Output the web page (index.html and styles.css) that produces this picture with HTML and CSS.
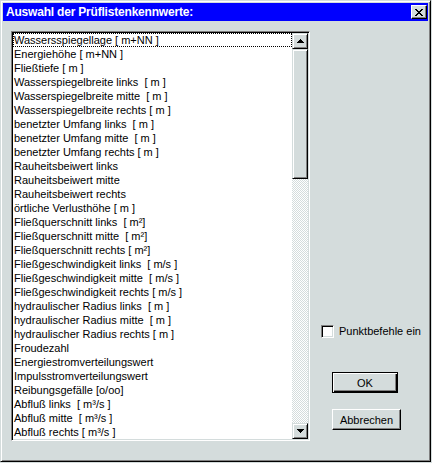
FILE: index.html
```html
<!DOCTYPE html>
<html lang="de">
<head>
<meta charset="utf-8">
<title>Auswahl der Prüflistenkennwerte</title>
<link rel="stylesheet" href="styles.css">
</head>
<body>
<div class="window">
  <div class="titlebar">
    <span class="title">Auswahl der Prüflistenkennwerte:</span>
    <div class="close">
      <svg width="8" height="7" viewBox="0 0 8 7" shape-rendering="crispEdges">
        <rect x="0" y="0" width="2" height="1"/><rect x="6" y="0" width="2" height="1"/>
        <rect x="1" y="1" width="2" height="1"/><rect x="5" y="1" width="2" height="1"/>
        <rect x="2" y="2" width="4" height="1"/>
        <rect x="3" y="3" width="2" height="1"/>
        <rect x="2" y="4" width="4" height="1"/>
        <rect x="1" y="5" width="2" height="1"/><rect x="5" y="5" width="2" height="1"/>
        <rect x="0" y="6" width="2" height="1"/><rect x="6" y="6" width="2" height="1"/>
      </svg>
    </div>
  </div>
  <div class="content">
    <div class="listbox">
      <ul class="items">
        <li class="focus">Wassersspiegellage [ m+NN ]</li>
        <li>Energiehöhe [ m+NN ]</li>
        <li>Fließtiefe [ m ]</li>
        <li>Wasserspiegelbreite links  [ m ]</li>
        <li>Wasserspiegelbreite mitte  [ m ]</li>
        <li>Wasserspiegelbreite rechts [ m ]</li>
        <li>benetzter Umfang links  [ m ]</li>
        <li>benetzter Umfang mitte  [ m ]</li>
        <li>benetzter Umfang rechts [ m ]</li>
        <li>Rauheitsbeiwert links</li>
        <li>Rauheitsbeiwert mitte</li>
        <li>Rauheitsbeiwert rechts</li>
        <li>örtliche Verlusthöhe [ m ]</li>
        <li>Fließquerschnitt links  [ m²]</li>
        <li>Fließquerschnitt mitte  [ m²]</li>
        <li>Fließquerschnitt rechts [ m²]</li>
        <li>Fließgeschwindigkeit links  [ m/s ]</li>
        <li>Fließgeschwindigkeit mitte  [ m/s ]</li>
        <li>Fließgeschwindigkeit rechts [ m/s ]</li>
        <li>hydraulischer Radius links  [ m ]</li>
        <li>hydraulischer Radius mitte  [ m ]</li>
        <li>hydraulischer Radius rechts [ m ]</li>
        <li>Froudezahl</li>
        <li>Energiestromverteilungswert</li>
        <li>Impulsstromverteilungswert</li>
        <li>Reibungsgefälle [o/oo]</li>
        <li>Abfluß links  [ m³/s ]</li>
        <li>Abfluß mitte  [ m³/s ]</li>
        <li>Abfluß rechts [ m³/s ]</li>
      </ul>
      <div class="scrollbar">
        <div class="sb-btn">
          <svg width="7" height="4" viewBox="0 0 7 4" shape-rendering="crispEdges">
            <rect x="3" y="0" width="1" height="1"/><rect x="2" y="1" width="3" height="1"/>
            <rect x="1" y="2" width="5" height="1"/><rect x="0" y="3" width="7" height="1"/>
          </svg>
        </div>
        <div class="thumb"></div>
        <div class="track"></div>
        <div class="sb-btn">
          <svg width="7" height="4" viewBox="0 0 7 4" shape-rendering="crispEdges">
            <rect x="0" y="0" width="7" height="1"/><rect x="1" y="1" width="5" height="1"/>
            <rect x="2" y="2" width="3" height="1"/><rect x="3" y="3" width="1" height="1"/>
          </svg>
        </div>
      </div>
    </div>
    <div class="side">
      <label class="check"><span class="box"></span><span>Punktbefehle ein</span></label>
      <div class="btn ok">OK</div>
      <div class="btn cancel">Abbrechen</div>
    </div>
  </div>
</div>
</body>
</html>
```

FILE: styles.css
```css
* { box-sizing: border-box; }

body {
  margin: 0;
  background: #d4dcdc;
  font-family: "Liberation Sans", Arial, sans-serif;
  font-size: 11px;
  color: #000;
}

.window {
  width: 431px;
  height: 462px;
  background: #d4dcdc;
  border-top: 1px solid #d4dcdc;
  border-left: 1px solid #d4dcdc;
  border-right: 1px solid #000;
  border-bottom: 1px solid #000;
  box-shadow: inset 1px 1px #fff, inset -1px -1px #808080;
  padding: 2px;
  display: flex;
  flex-direction: column;
}

.titlebar {
  height: 18px;
  background: #0000ff;
  color: #fff;
  display: flex;
  align-items: center;
  justify-content: space-between;
  padding: 0 1px 0 3px;
}

.title {
  font-weight: bold;
  font-size: 12px;
  letter-spacing: -0.2px;
  line-height: 18px;
}

.close {
  width: 16px;
  height: 14px;
  background: #d4dcdc;
  border-top: 1px solid #fff;
  border-left: 1px solid #fff;
  border-right: 1px solid #000;
  border-bottom: 1px solid #000;
  box-shadow: inset -1px -1px #808080;
  display: flex;
  align-items: center;
  justify-content: center;
  padding-right: 1px;
}

.content {
  display: flex;
  align-items: flex-start;
  padding: 10px 0 0 8px;
}

.listbox {
  width: 299px;
  height: 410px;
  background: #fff;
  border-top: 1px solid #808080;
  border-left: 1px solid #808080;
  border-right: 1px solid #fff;
  border-bottom: 1px solid #fff;
  box-shadow: inset 1px 1px #000, inset -1px -1px #d4dcdc;
  padding: 1px;
  display: flex;
}

.items {
  width: 279px;
  list-style: none;
  margin: 0;
  padding: 0;
  overflow: hidden;
}

.items li {
  height: 14px;
  line-height: 14px;
  padding-left: 1px;
  white-space: pre;
}

.items li.focus {
  outline: 1px dotted #000;
  outline-offset: -1px;
}

.scrollbar {
  width: 16px;
  display: flex;
  flex-direction: column;
}

.sb-btn, .thumb {
  background: #d4dcdc;
  border-top: 1px solid #d4dcdc;
  border-left: 1px solid #d4dcdc;
  border-right: 1px solid #000;
  border-bottom: 1px solid #000;
  box-shadow: inset 1px 1px #fff, inset -1px -1px #808080;
}

.sb-btn {
  height: 16px;
  display: flex;
  align-items: center;
  justify-content: center;
}

.thumb {
  height: 130px;
}

.track {
  flex: 1;
  background-color: #fff;
  background-image: conic-gradient(#d4dcdc 25%, #fff 0 50%, #d4dcdc 0 75%, #fff 0);
  background-size: 2px 2px;
}

.side {
  display: flex;
  flex-direction: column;
  align-items: flex-start;
  margin-left: 11px;
  padding-top: 294px;
}

.check {
  display: flex;
  align-items: center;
  gap: 5px;
  height: 13px;
  line-height: 13px;
}

.box {
  width: 13px;
  height: 13px;
  background: #fff;
  border-top: 1px solid #808080;
  border-left: 1px solid #808080;
  border-right: 1px solid #fff;
  border-bottom: 1px solid #fff;
  box-shadow: inset 1px 1px #000, inset -1px -1px #d4dcdc;
}

.btn {
  margin-left: 11px;
  height: 21px;
  display: flex;
  align-items: center;
  justify-content: center;
  background: #d4dcdc;
}

.ok {
  width: 66px;
  margin-top: 34px;
  border: 1px solid #000;
  box-shadow: inset 1px 1px #fff, inset -1px -1px #000, inset -2px -2px #808080;
}

.cancel {
  width: 69px;
  margin-top: 16px;
  border-top: 1px solid #fff;
  border-left: 1px solid #fff;
  border-right: 1px solid #000;
  border-bottom: 1px solid #000;
  box-shadow: inset -1px -1px #808080;
}
```
